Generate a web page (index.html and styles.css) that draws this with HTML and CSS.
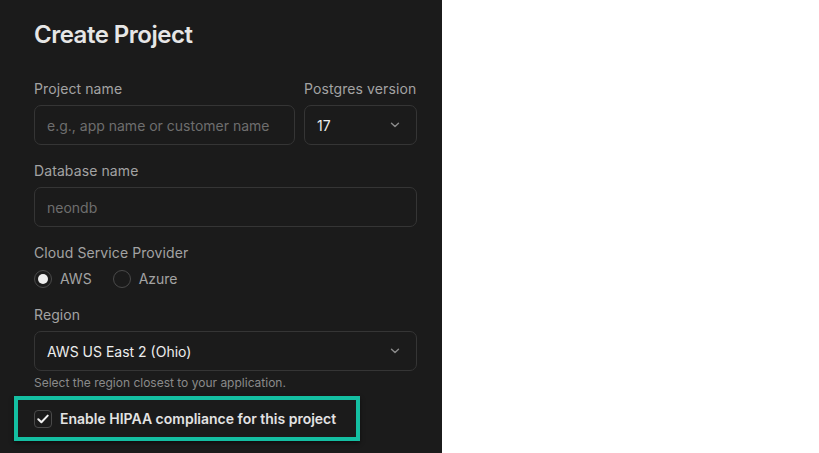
FILE: index.html
```html
<!DOCTYPE html>
<html>
<head>
<meta charset="utf-8">
<link rel="stylesheet" href="styles.css">
</head>
<body>
<div class="page">
  <div class="panel">
    <h1 class="title">Create Project</h1>
    <div class="row">
      <div class="field grow">
        <label class="label">Project name</label>
        <div class="input placeholder">e.g., app name or customer name</div>
      </div>
      <div class="field pg">
        <label class="label">Postgres version</label>
        <div class="input select">
          <span class="value">17</span>
          <svg class="chev" width="10" height="6" viewBox="0 0 10 6"><path d="M1.5 1.2 L5 4.6 L8.5 1.2" fill="none" stroke="#8a8a8a" stroke-width="1.4" stroke-linecap="round" stroke-linejoin="round"/></svg>
        </div>
      </div>
    </div>
    <div class="field">
      <label class="label">Database name</label>
      <div class="input placeholder">neondb</div>
    </div>
    <div class="field">
      <label class="label">Cloud Service Provider</label>
      <div class="radios">
        <div class="radio"><span class="circle on"><span class="dot"></span></span><span class="rtext">AWS</span></div>
        <div class="radio"><span class="circle"></span><span class="rtext">Azure</span></div>
      </div>
    </div>
    <div class="field">
      <label class="label">Region</label>
      <div class="input select">
        <span class="value">AWS US East 2 (Ohio)</span>
        <svg class="chev" width="10" height="6" viewBox="0 0 10 6"><path d="M1.5 1.2 L5 4.6 L8.5 1.2" fill="none" stroke="#8a8a8a" stroke-width="1.4" stroke-linecap="round" stroke-linejoin="round"/></svg>
      </div>
      <div class="help">Select the region closest to your application.</div>
    </div>
    <div class="highlight">
      <span class="checkbox">
        <svg width="12" height="10" viewBox="0 0 12 10"><path d="M1.3 5.2 L4.4 8.2 L10.7 1.6" fill="none" stroke="#f2f2f2" stroke-width="2" stroke-linecap="round" stroke-linejoin="round"/></svg>
      </span>
      <span class="ctext">Enable HIPAA compliance for this project</span>
    </div>
  </div>
</div>
</body>
</html>
```
FILE: styles.css
```css
html, body {
  margin: 0;
  padding: 0;
  background: #ffffff;
}
body {
  font-family: Inter, "Noto Sans", sans-serif;
}
.page {
  width: 819px;
  height: 453px;
  overflow: hidden;
  background: #ffffff;
}
.panel {
  width: 442px;
  height: 453px;
  box-sizing: border-box;
  background: #1b1b1b;
  padding: 19px 25px 0 34px;
  display: flex;
  flex-direction: column;
}
.title {
  margin: 0 0 28px 0;
  font-size: 24px;
  line-height: 32px;
  font-weight: 600;
  color: #e6e6e6;
  letter-spacing: -0.5px;
}
.row {
  display: flex;
  gap: 9px;
  margin-bottom: 16px;
}
.field {
  display: flex;
  flex-direction: column;
  margin-bottom: 16px;
}
.row .field {
  margin-bottom: 0;
}
.grow {
  flex: 1;
}
.pg {
  width: 113px;
}
.label {
  font-size: 14px;
  line-height: 20px;
  color: #a3a3a3;
  margin-bottom: 6px;
  white-space: nowrap;
  letter-spacing: 0.1px;
}
.input {
  height: 40px;
  box-sizing: border-box;
  border: 1px solid #353535;
  border-radius: 7px;
  background: #1b1b1b;
  padding: 0 12px 0 12px;
  display: flex;
  align-items: center;
  font-size: 14px;
  color: #ededed;
}
.placeholder {
  color: #6e6e6e;
}
.select {
  justify-content: space-between;
}
.select .value {
  color: #ededed;
}
.chev {
  margin-right: 4px;
}
.radios {
  display: flex;
  gap: 21px;
  height: 20px;
  align-items: center;
}
.radio {
  display: flex;
  align-items: center;
  gap: 8px;
}
.circle {
  width: 18px;
  height: 18px;
  box-sizing: border-box;
  border: 1px solid #4a4a4a;
  border-radius: 50%;
  display: flex;
  align-items: center;
  justify-content: center;
}
.dot {
  width: 10px;
  height: 10px;
  border-radius: 50%;
  background: #ededed;
}
.rtext {
  font-size: 14px;
  line-height: 20px;
  color: #a3a3a3;
}
.help {
  margin-top: 4px;
  font-size: 12px;
  line-height: 16px;
  color: #8a8a8a;
}
.highlight {
  margin-top: -11px;
  margin-left: -20px;
  width: 346px;
  height: 45px;
  box-sizing: border-box;
  border: 4px solid #14bfa2;
  box-shadow: 0 2px 4px rgba(0,0,0,0.5);
  display: flex;
  align-items: center;
  padding-left: 16px;
  gap: 8px;
}
.checkbox {
  width: 18px;
  height: 18px;
  box-sizing: border-box;
  border: 1px solid #4a4a4a;
  border-radius: 4px;
  display: flex;
  align-items: center;
  justify-content: center;
}
.ctext {
  font-size: 14px;
  font-weight: 600;
  color: #e3e3e3;
  line-height: 20px;
}
```
